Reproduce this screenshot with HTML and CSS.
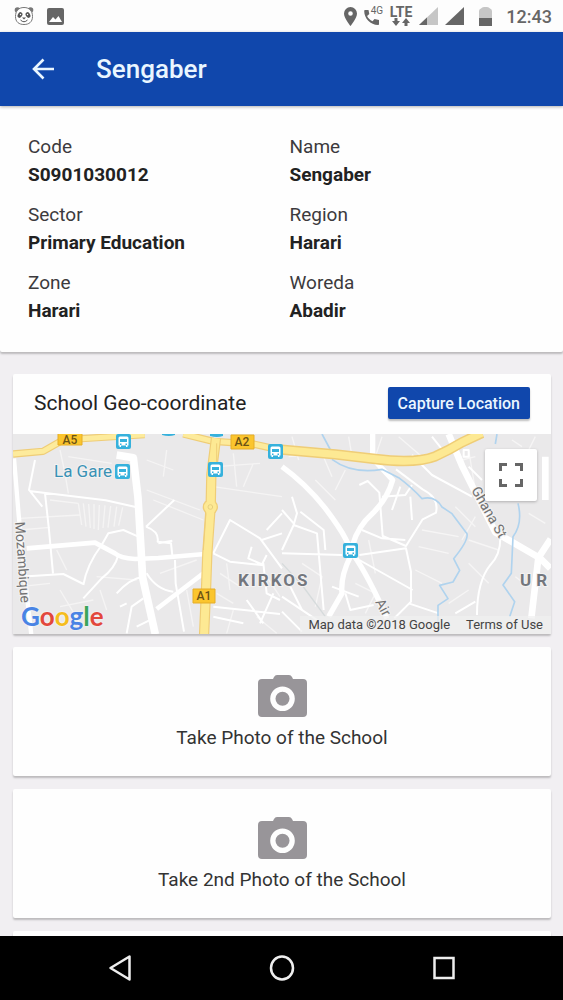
FILE: index.html
```html
<!DOCTYPE html>
<html lang="en">
<head>
  <meta charset="UTF-8">
  <meta name="viewport" content="width=device-width, initial-scale=1.0">
  <title>Sengaber</title>
  <link rel="stylesheet" href="styles.css">
</head>
<body>

  <div class="status-bar">
    <svg width="20" height="20" viewBox="0 0 20 20">
      <circle cx="3.500" cy="4" r="2.800" fill="#777"/>
      <circle cx="16.500" cy="4" r="2.800" fill="#777"/>
      <path d="M10 1.500C4.500 1.500 1.500 5 1.500 10.500S5 18.500 10 18.500s8.500-2.500 8.500-8S15.500 1.500 10 1.500z" fill="#fff" stroke="#777"/>
      <ellipse cx="6" cy="9" rx="2.200" ry="3" transform="rotate(30 6 9)" fill="#555"/>
      <ellipse cx="14" cy="9" rx="2.200" ry="3" transform="rotate(-30 14 9)" fill="#555"/>
      <circle cx="6.500" cy="8.500" r=".7" fill="#fff"/>
      <circle cx="13.500" cy="8.500" r=".7" fill="#fff"/>
      <path d="M8 11.500h4l-2 2z" fill="#555"/>
      <path d="M6.500 14q3.500 3.500 7 0" fill="none" stroke="#555"/>
    </svg>
    <svg width="17" height="17" viewBox="0 0 17 17">
      <rect width="17" height="17" rx="2" fill="#666"/>
      <path d="M2 14l4-5 2.500 2.500L11.500 8l3.500 6z" fill="#fff"/>
    </svg>
    <span class="spacer"></span>
    <svg width="13" height="19" viewBox="0 0 13 19">
      <path fill-rule="evenodd" d="M6.500 0A6.500 6.500 0 0 0 0 6.500C0 11.400 6.500 19 6.500 19S13 11.400 13 6.500A6.500 6.500 0 0 0 6.500 0zm0 4.200a2.300 2.300 0 1 1 0 4.600 2.300 2.300 0 0 1 0-4.600z" fill="#666"/>
    </svg>
    <div class="call-icon">
      <svg width="16" height="16" viewBox="0 0 16 16">
        <path d="M1 1h3.500l.8 4-2.200 2c1.200 2.400 2.900 4.100 5.400 5.300l2-2.200 4.500.9V15c0 .6-.4 1-1 1C6.500 16 .2 9.500.2 2c0-.6.300-1 .8-1z" fill="#666"/>
      </svg>
      <span>4G</span>
    </div>
    <div class="lte">
      <span>LTE</span>
      <svg width="18" height="8" viewBox="0 0 18 8">
        <path d="M2.500 0h3v3H8L4 8 0 3h2.500zM12.500 8h3V5H18l-4-5-4 5h2.500z" fill="#666"/>
      </svg>
    </div>
    <svg width="19" height="18" viewBox="0 0 19 18">
      <path d="M19 0v18H0z" fill="#c6c6c6"/>
      <path d="M8 10.400V18H0z" fill="#666"/>
    </svg>
    <svg width="19" height="18" viewBox="0 0 19 18">
      <path d="M19 0v18H0z" fill="#666"/>
    </svg>
    <svg class="battery" width="13" height="19" viewBox="0 0 13 19">
      <path d="M0 11V4q0-2 2-2.500Q3 0 5 0h3q2 0 3 1.500 2 .5 2 2.500v7z" fill="#c6c6c6"/>
      <path d="M0 11h13v8H0z" fill="#666"/>
    </svg>
    <span class="clock">12:43</span>
  </div>

  <header class="toolbar">
    <button class="back-btn" aria-label="Back">
      <svg width="22" height="22" viewBox="0 0 22 22">
        <path d="M11.500 1.500L2 11l9.500 9.500M2 11h20" fill="none" stroke="#eaf6ff" stroke-width="2.600"/>
      </svg>
    </button>
    <h1>Sengaber</h1>
  </header>

  <main class="content">
    <dl class="details">
      <div><dt>Code</dt><dd>S0901030012</dd></div>
      <div><dt>Name</dt><dd>Sengaber</dd></div>
      <div><dt>Sector</dt><dd>Primary Education</dd></div>
      <div><dt>Region</dt><dd>Harari</dd></div>
      <div><dt>Zone</dt><dd>Harari</dd></div>
      <div><dt>Woreda</dt><dd>Abadir</dd></div>
    </dl>

    <div class="cards">
      <section class="card">
        <div class="card-header">
          <h2>School Geo-coordinate</h2>
          <button class="capture-btn">Capture Location</button>
        </div>

        <div class="map">
          <svg class="map-canvas" viewBox="0 0 538 200" preserveAspectRatio="xMidYMid slice">
            <defs>
              <g id="bus">
                <rect width="15" height="15" rx="2" fill="#36b1dc"/>
                <path fill-rule="evenodd" d="M4 2.500h7q1.500 0 1.500 1.500v7.500h-1V13H10v-1.500H5V13H3.500v-1.500h-1V4Q2.500 2.500 4 2.500zM4 5v3h7V5zm0 4.500V11h1.500V9.500zm5.500 0V11H11V9.500z" fill="#fff"/>
              </g>
            </defs>

            <!-- west half -->
            <g transform="scale(.33333) translate(-39 -12)" fill="none" stroke-linejoin="round">
              <g stroke="#f5f4f4" stroke-width="4">
                <path d="M235 220l10 65M250 220l8 70M266 222l5 72M282 222v75M298 225l-3 75M315 226l-6 68M332 228l-8 65M350 230l-8 60M368 232l-12 55"/>
                <path d="M180 60l15 70 10 60M205 80l130 20M440 90l80 30M500 60l-10 80M440 180l160 60M460 210l150 60M640 170l206 30M700 70l10 100M650 110l130-10M760 100l-30 70M60 265l180-10M60 300l90-8M150 210l85 10"/>
                <path d="M60 470l90-10M170 360l30 60M290 440l120 10M300 480l20 60M180 530l100-20M180 480l60 100M480 430l110-40M560 480l20 110M660 430l60 40M650 490l50 30M680 400l10 80M700 540l-20 70M770 560l60 50M800 440l40 60"/>
              </g>
              <g stroke="#fff" stroke-width="6">
                <path d="M105 90l-18 90 40 50M87 183l230 28 100 22M135 190l12 110 12 130M60 440l130-8 60 30M355 375q-10 40-50 70l-55 60M250 465q10-60 55-120l20-35 45-10 45 20M438 290l85-80M438 290q40 15 35 45l40 5 5 45M475 340l42-8M525 390l2 70 25 145M440 430q30 50 80 55"/>
                <path d="M380 610l15-80 35-25M350 490q40-45 80-50M380 520l-20 10M410 590l50-25M640 370l50-100 90 55 66 90M640 370l50 25 95 10 15-30M755 350l-10 35 45 20M785 330l61-20M640 530l200 22M640 560l90 20M820 490l-40 90M790 400l10 90 40 20M800 300l46-50M740 510l50 70"/>
              </g>
              <path d="M42 85l14 170 20 200 18 160" stroke="#fff" stroke-width="13"/>
              <path d="M80 355l205-17 60 32q15 14 60 17l70-3 140-12M470 537l140-107" stroke="#fff" stroke-width="14"/>
              <path d="M350 75l50 8 14 120 14 240 38 170" stroke="#fff" stroke-width="23"/>
              <path d="M39 72l90-8 60-34 55-4 190-12M550 12l90 22 120 8 90 20" stroke="#efcd77" stroke-width="22"/>
              <path d="M39 72l90-8 60-34 55-4 190-12M550 12l90 22 120 8 90 20" stroke="#fdeb9c" stroke-width="15"/>
              <path d="M648 25l-14 110-2 95-10 140-4 110-6 140" stroke="#efcd77" stroke-width="31"/>
              <circle cx="631" cy="231" r="23" fill="#efcd77"/>
              <path d="M648 25l-14 110-2 95-10 140-4 110-6 140" stroke="#fde993" stroke-width="24"/>
              <circle cx="631" cy="231" r="19" fill="#fde993"/>
              <circle cx="631" cy="231" r="7" stroke="#e6cf7d" stroke-width="3"/>
              <path d="M650 40v80M618 250l-8 110" stroke="#efcd77" stroke-width="3"/>
            </g>

            <!-- east half -->
            <g transform="scale(.33333) translate(807 -12)" fill="none" stroke-linejoin="round">
              <g stroke="#f6f5f5" stroke-width="4">
                <path d="M20 80l100-10 30 70M30 20l20 70M200 20l10 60M300 20l-20 60M350 20l70 60M190 120l-30 60M100 150l60 60M560 60l20 120M540 90l40-10M520 230l60 60M420 300l110 20M410 350l90 20M400 420l80 40M560 330l90 30M560 400l60 60M500 520l60-40M580 260l-40 70M700 440l40 30M60 400l60 40-20 90M220 460l60 30-30 60M260 330l20 100M690 30l30 20M740 250l50 30M760 20l-20 40"/>
              </g>
              <g stroke="#fff" stroke-width="6">
                <path d="M0 360l35-75 70 25 20 230M30 200l15 50-10 35M0 240l35 40M0 370l180 5M130 360l-5-60-70-55M232 165l25-12 35 35 10 130 70 30 50-80 40-20q10-45-40-70l-80-60M355 170l-25 70M300 200l70-5 20-30M385 200l5 70M240 300l60 25 70 5M232 375l140-20 15 70v90l-50 50M232 390l160 90M190 490l15 50 70-15M390 75l60 60 120 65M450 20l40 50M655 325q0 50-30 80-40 50-40 150M380 520l90 30M520 550l60-35M0 500l120 80"/>
                <path d="M150 470l80 30M20 460l40 80M0 545l60 60M560 110l40 40M560 60v20h-15V60z"/>
              </g>
              <path d="M0 110q70 50 130 125 45 60 60 90l25 50q45 65 100 190M212 345q15-55 60-95 45-45 60-100l-60-65V12M205 380q-30 60-25 110l-40 70" stroke="#fff" stroke-width="16"/>
              <path d="M500 12l40 95 100 200 130 75 36-55M770 375l-22 190M765 375l40 40M790 80v130" stroke="#fff" stroke-width="20"/>
              <path d="M120 12l32 60M150 88q60 45 150 30l50 25q40 30 70 63 40-10 60 25l30 20 45 60q5 20-40 75l18 35-20 35-40 10 25 40-30 20v55M645 12l-5 30M708 220q15 60-15 100l-5 110-25 35 35 50-15 45" stroke="#b0d3ee" stroke-width="5"/>
              <path d="M0 400l60 65 70 95" stroke="#d6dbdc" stroke-width="4"/>
              <path d="M-10 58l170 15 120 14q120 15 180-8 40-18 80-42l60-28" stroke="#efcd77" stroke-width="31"/>
              <path d="M-10 58l170 15 120 14q120 15 180-8 40-18 80-42l60-28" stroke="#fde993" stroke-width="22"/>
            </g>

            <g fill="#fbc52d" stroke="#e5ad28">
              <path d="M45 -3h24v14H45zM218 1h23v14h-23zM180 155h22v14h-22z"/>
            </g>
            <g class="route">
              <text x="57" y="10">A5</text>
              <text x="229" y="12">A2</text>
              <text x="191" y="166">A1</text>
            </g>

            <use href="#bus" x="103" y="0"/>
            <use href="#bus" x="102" y="30"/>
            <use href="#bus" x="195" y="28"/>
            <use href="#bus" x="255" y="10"/>
            <use href="#bus" x="330" y="109"/>
            <path d="M149 0h13v1q-6 2-13 0zM197 0h13v2q-6 2-13 0z" fill="#36b1dc"/>

            <text class="station" x="41" y="43">La Gare</text>
            <text class="district" x="225" y="152">KIRKOS</text>
            <text class="district wide" x="507" y="152">UR</text>
            <text class="street" transform="translate(2 88) rotate(86)">Mozambique</text>
            <text class="street" transform="translate(458 56) rotate(60)">Ghana St</text>
            <text class="street" transform="translate(362 168) rotate(62)">Air</text>
          </svg>

          <button class="fullscreen-btn" aria-label="Toggle fullscreen view">
            <svg width="24" height="24" viewBox="0 0 24 24">
              <path d="M1.500 8V1.500H8M16 1.500h6.500V8M22.500 16v6.500H16M8 22.500H1.500V16" fill="none" stroke="#666" stroke-width="3"/>
            </svg>
          </button>

          <div class="map-footer">
            <a class="google" href="#" aria-label="Google"><span class="blue">G</span><span class="red">o</span><span class="yellow">o</span><span class="blue">g</span><span class="green">l</span><span class="red">e</span></a>
            <div class="credits">
              <span>Map data ©2018 Google</span>
              <a href="#">Terms of Use</a>
            </div>
          </div>
        </div>
      </section>

      <button class="card photo-card">
        <svg width="49" height="42" viewBox="0 0 49 42">
          <path fill-rule="evenodd" d="M19 0h12q2 0 3 2l1 2h10q4 0 4 4v30q0 4-4 4H4q-4 0-4-4V8q0-4 4-4h11l1-2q1-2 3-2zm5.500 11.500a12.300 12.300 0 1 0 0 24.600 12.300 12.300 0 0 0 0-24.600z" fill="#989599"/>
          <circle cx="24.500" cy="23.800" r="7" fill="#989599"/>
        </svg>
        <span>Take Photo of the School</span>
      </button>

      <button class="card photo-card">
        <svg width="49" height="42" viewBox="0 0 49 42">
          <path fill-rule="evenodd" d="M19 0h12q2 0 3 2l1 2h10q4 0 4 4v30q0 4-4 4H4q-4 0-4-4V8q0-4 4-4h11l1-2q1-2 3-2zm5.500 11.500a12.300 12.300 0 1 0 0 24.600 12.300 12.300 0 0 0 0-24.600z" fill="#989599"/>
          <circle cx="24.500" cy="23.800" r="7" fill="#989599"/>
        </svg>
        <span>Take 2nd Photo of the School</span>
      </button>

      <div class="card next-card"></div>
    </div>
  </main>

  <nav class="nav-bar">
    <button aria-label="Back">
      <svg width="24" height="28" viewBox="0 0 24 28">
        <path d="M21.500 2.500v23L2.500 14z" fill="none" stroke="#eee" stroke-width="2.500" stroke-linejoin="round"/>
      </svg>
    </button>
    <button aria-label="Home">
      <svg width="26" height="28" viewBox="0 0 26 28">
        <ellipse cx="13" cy="14" rx="11" ry="11.500" fill="none" stroke="#eee" stroke-width="2.500"/>
      </svg>
    </button>
    <button aria-label="Recent apps">
      <svg width="24" height="26" viewBox="0 0 24 26">
        <rect x="2.500" y="3" width="19" height="20" fill="none" stroke="#eee" stroke-width="2.500"/>
      </svg>
    </button>
  </nav>

</body>
</html>
```
FILE: styles.css
```css
* {
  box-sizing: border-box;
}

body {
  margin: 0;
  height: 100vh;
  display: flex;
  flex-direction: column;
  font-family: Roboto, "Liberation Sans", sans-serif;
  background: #f1eff2;
  color: #222;
  overflow: hidden;
}

button {
  border: none;
  padding: 0;
  font-family: inherit;
  cursor: pointer;
}

svg {
  display: block;
  flex: none;
}

/* status bar */
.status-bar {
  flex: none;
  display: flex;
  align-items: center;
  gap: 7px;
  height: 32px;
  padding: 0 11px 0 14px;
  background: #fdfdfd;
  color: #666;
}

.status-bar > svg:nth-child(2) {
  margin-left: 6px;
}

.spacer {
  flex: 1;
}

.call-icon {
  position: relative;
  width: 19px;
  padding-top: 2px;
}

.call-icon span {
  position: absolute;
  top: -2px;
  left: 7px;
  font-size: 10px;
  line-height: 12px;
}

.lte {
  display: flex;
  flex-direction: column;
  align-items: center;
  font-size: 14px;
  font-weight: 700;
  line-height: 12px;
}

.status-bar .battery {
  margin: 0 7px 0 8px;
}

.clock {
  font-size: 18px;
  font-weight: 500;
}

/* toolbar */
.toolbar {
  flex: none;
  display: flex;
  align-items: center;
  gap: 42px;
  height: 74px;
  padding: 0 32px;
  background: #1047ac;
  box-shadow: 0 1px 3px rgba(0, 0, 0, 0.3);
  z-index: 1;
}

.back-btn {
  background: none;
}

.toolbar h1 {
  margin: 0;
  font-size: 26px;
  font-weight: 500;
  color: #eaf6ff;
}

/* school details */
.content {
  flex: 1;
  min-height: 0;
  overflow: hidden;
}

.details {
  display: grid;
  grid-template-columns: 1fr 1fr;
  gap: 12px 16px;
  margin: 0;
  padding: 27px 28px;
  background: #fefefe;
  border-radius: 0 0 2px 2px;
  box-shadow: 0 2px 2px rgba(0, 0, 0, 0.22);
  font-size: 19px;
  line-height: 28px;
}

.details dt {
  color: #3c3a3d;
}

.details dd {
  margin: 0;
  font-weight: 700;
}

/* cards */
.cards {
  display: flex;
  flex-direction: column;
  gap: 13px;
  padding: 22px 12px 0 13px;
}

.card {
  background: #fefefe;
  border-radius: 2px;
  box-shadow: 0 2px 2px rgba(0, 0, 0, 0.22);
}

.card-header {
  display: flex;
  align-items: center;
  justify-content: space-between;
  height: 60px;
  padding: 0 21px 2px;
}

.card-header h2 {
  margin: 0;
  font-size: 21px;
  font-weight: 400;
}

.capture-btn {
  height: 32px;
  padding: 0 10px;
  border-radius: 2px;
  background: #1047ac;
  box-shadow: 0 2px 2px rgba(0, 0, 0, 0.25);
  color: #eaf6ff;
  font-size: 16px;
  font-weight: 500;
}

.photo-card {
  display: flex;
  flex-direction: column;
  align-items: center;
  padding: 28px 0 26px;
  color: #333;
  font-size: 19px;
  line-height: 24px;
}

.photo-card span {
  margin-top: 9px;
}

.next-card {
  height: 129px;
}

/* map */
.map {
  position: relative;
  height: 200px;
  overflow: hidden;
}

.map-canvas {
  width: 100%;
  height: 100%;
  background: #eae9ea;
}

.map text {
  stroke: #f3f2f2;
  stroke-width: 2px;
  paint-order: stroke;
}

.map .route text {
  font-size: 12px;
  font-weight: 500;
  text-anchor: middle;
  fill: #6b5215;
  stroke: none;
}

.map .station {
  font-size: 17px;
  fill: #3991b5;
}

.map .district {
  font-size: 17px;
  font-weight: 700;
  letter-spacing: 2px;
  fill: #73777e;
}

.map .wide {
  letter-spacing: 5px;
}

.map .street {
  font-size: 14px;
  fill: #717171;
}

.fullscreen-btn {
  position: absolute;
  top: 15px;
  right: 14px;
  display: flex;
  align-items: center;
  justify-content: center;
  width: 52px;
  height: 52px;
  border-radius: 2px;
  background: #fff;
  box-shadow: 0 1px 3px rgba(0, 0, 0, 0.25);
}

.map-footer {
  position: absolute;
  left: 0;
  right: 0;
  bottom: 0;
  display: flex;
  align-items: flex-end;
  justify-content: space-between;
  padding-left: 8px;
}

.google {
  font-family: Lato, sans-serif;
  font-size: 26px;
  font-weight: 700;
  line-height: 36px;
  text-decoration: none;
  text-shadow: 0 0 2px #fff;
}

.blue {
  color: #4a84e4;
}

.red {
  color: #e2483d;
}

.yellow {
  color: #f5bd1d;
}

.green {
  color: #3ba55a;
}

.credits {
  display: flex;
  gap: 16px;
  padding: 0 8px;
  background: rgba(240, 239, 240, 0.7);
  color: #444;
  font-size: 13px;
  line-height: 18px;
}

.credits a {
  color: inherit;
  text-decoration: none;
}

/* android buttons */
.nav-bar {
  flex: none;
  display: flex;
  align-items: center;
  justify-content: space-around;
  height: 64px;
  padding: 0 39px;
  background: #000;
}

.nav-bar button {
  background: none;
}
```
